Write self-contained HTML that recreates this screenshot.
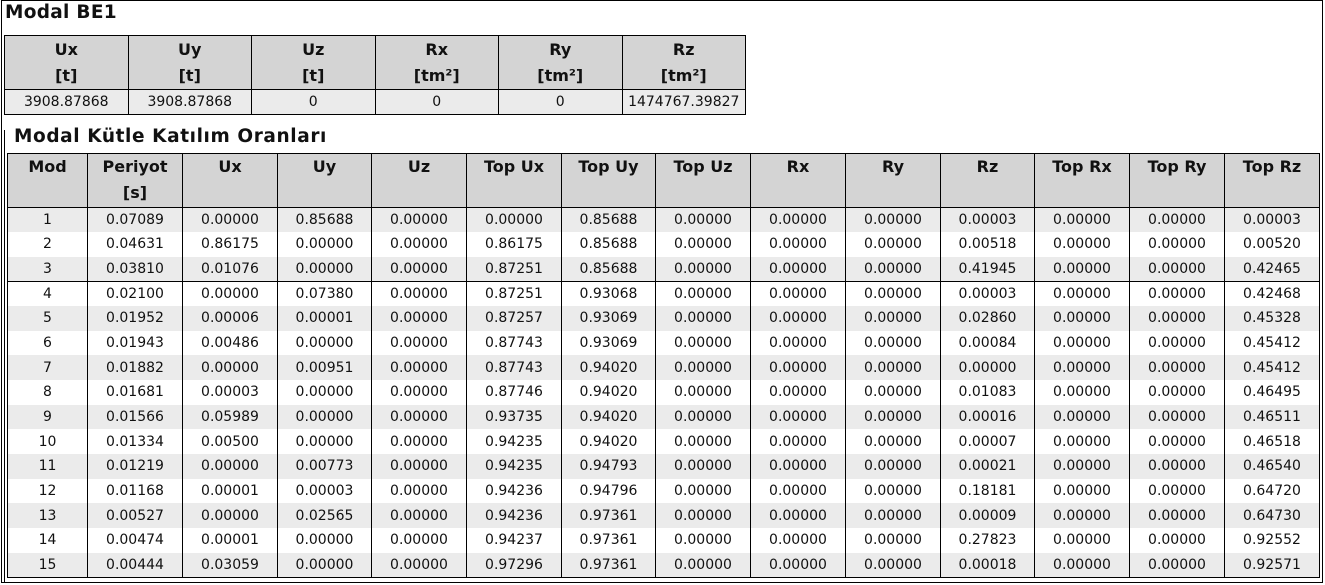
<!DOCTYPE html>
<html><head><meta charset="utf-8"><style>
*{margin:0;padding:0;box-sizing:border-box}
body{width:1325px;height:585px;background:#fff;font-family:"DejaVu Sans",Verdana,"Liberation Sans",sans-serif;color:#111;position:relative;overflow:hidden}
.frame{position:absolute;left:1px;top:0;width:1322px;height:583px;border:1px solid #000}
h1{position:absolute;left:5px;top:2px;font-size:18.5px;font-weight:bold;letter-spacing:0.3px}
h2{position:absolute;left:14px;top:126px;font-size:18.5px;font-weight:bold;letter-spacing:0.6px}
table{border-collapse:collapse;table-layout:fixed;position:absolute}
td,th{text-align:center;font-size:14px;padding:0;white-space:nowrap}
th{background:#d4d4d4;font-weight:bold;vertical-align:top;line-height:26px;padding-top:1px;font-size:16px}
#t1{left:4px;top:35px;width:742px;border:1px solid #000}
#t1 th,#t1 td{border:1px solid #000}
#t1 th{height:54px}
#t1 td{height:25px;background:#ebebeb}
#t2{left:7px;top:153px;width:1313px;border:1px solid #000}
#t2 th{height:54px;border:1px solid #000;padding-top:0;line-height:26px}
#t2 td{height:24.67px;border-left:1px solid #000;border-right:1px solid #000}
#t2 tr:nth-child(even) td{background:#ebebeb}
#t2 tr.sep td{border-bottom:1px solid #000}
.vl{position:absolute;left:4px;top:130px;width:1px;height:452px;background:#000}
</style></head><body>
<div class="frame"></div>
<h1>Modal BE1</h1>
<table id="t1">
<tr><th>Ux<br>[t]</th><th>Uy<br>[t]</th><th>Uz<br>[t]</th><th>Rx<br>[tm²]</th><th>Ry<br>[tm²]</th><th>Rz<br>[tm²]</th></tr>
<tr><td>3908.87868</td><td>3908.87868</td><td>0</td><td>0</td><td>0</td><td>1474767.39827</td></tr>
</table>
<div class="vl"></div>
<h2>Modal Kütle Katılım Oranları</h2>
<table id="t2">
<colgroup><col style="width:80px"><col style="width:95px"><col style="width:95px"><col style="width:94px"><col style="width:95px"><col style="width:95px"><col style="width:94px"><col style="width:95px"><col style="width:95px"><col style="width:95px"><col style="width:94px"><col style="width:95px"><col style="width:95px"><col style="width:95px"></colgroup>
<tr><th>Mod</th><th>Periyot<br>[s]</th><th>Ux</th><th>Uy</th><th>Uz</th><th>Top Ux</th><th>Top Uy</th><th>Top Uz</th><th>Rx</th><th>Ry</th><th>Rz</th><th>Top Rx</th><th>Top Ry</th><th>Top Rz</th></tr>
<tr><td>1</td><td>0.07089</td><td>0.00000</td><td>0.85688</td><td>0.00000</td><td>0.00000</td><td>0.85688</td><td>0.00000</td><td>0.00000</td><td>0.00000</td><td>0.00003</td><td>0.00000</td><td>0.00000</td><td>0.00003</td></tr>
<tr><td>2</td><td>0.04631</td><td>0.86175</td><td>0.00000</td><td>0.00000</td><td>0.86175</td><td>0.85688</td><td>0.00000</td><td>0.00000</td><td>0.00000</td><td>0.00518</td><td>0.00000</td><td>0.00000</td><td>0.00520</td></tr>
<tr class="sep"><td>3</td><td>0.03810</td><td>0.01076</td><td>0.00000</td><td>0.00000</td><td>0.87251</td><td>0.85688</td><td>0.00000</td><td>0.00000</td><td>0.00000</td><td>0.41945</td><td>0.00000</td><td>0.00000</td><td>0.42465</td></tr>
<tr><td>4</td><td>0.02100</td><td>0.00000</td><td>0.07380</td><td>0.00000</td><td>0.87251</td><td>0.93068</td><td>0.00000</td><td>0.00000</td><td>0.00000</td><td>0.00003</td><td>0.00000</td><td>0.00000</td><td>0.42468</td></tr>
<tr><td>5</td><td>0.01952</td><td>0.00006</td><td>0.00001</td><td>0.00000</td><td>0.87257</td><td>0.93069</td><td>0.00000</td><td>0.00000</td><td>0.00000</td><td>0.02860</td><td>0.00000</td><td>0.00000</td><td>0.45328</td></tr>
<tr><td>6</td><td>0.01943</td><td>0.00486</td><td>0.00000</td><td>0.00000</td><td>0.87743</td><td>0.93069</td><td>0.00000</td><td>0.00000</td><td>0.00000</td><td>0.00084</td><td>0.00000</td><td>0.00000</td><td>0.45412</td></tr>
<tr><td>7</td><td>0.01882</td><td>0.00000</td><td>0.00951</td><td>0.00000</td><td>0.87743</td><td>0.94020</td><td>0.00000</td><td>0.00000</td><td>0.00000</td><td>0.00000</td><td>0.00000</td><td>0.00000</td><td>0.45412</td></tr>
<tr><td>8</td><td>0.01681</td><td>0.00003</td><td>0.00000</td><td>0.00000</td><td>0.87746</td><td>0.94020</td><td>0.00000</td><td>0.00000</td><td>0.00000</td><td>0.01083</td><td>0.00000</td><td>0.00000</td><td>0.46495</td></tr>
<tr><td>9</td><td>0.01566</td><td>0.05989</td><td>0.00000</td><td>0.00000</td><td>0.93735</td><td>0.94020</td><td>0.00000</td><td>0.00000</td><td>0.00000</td><td>0.00016</td><td>0.00000</td><td>0.00000</td><td>0.46511</td></tr>
<tr><td>10</td><td>0.01334</td><td>0.00500</td><td>0.00000</td><td>0.00000</td><td>0.94235</td><td>0.94020</td><td>0.00000</td><td>0.00000</td><td>0.00000</td><td>0.00007</td><td>0.00000</td><td>0.00000</td><td>0.46518</td></tr>
<tr><td>11</td><td>0.01219</td><td>0.00000</td><td>0.00773</td><td>0.00000</td><td>0.94235</td><td>0.94793</td><td>0.00000</td><td>0.00000</td><td>0.00000</td><td>0.00021</td><td>0.00000</td><td>0.00000</td><td>0.46540</td></tr>
<tr><td>12</td><td>0.01168</td><td>0.00001</td><td>0.00003</td><td>0.00000</td><td>0.94236</td><td>0.94796</td><td>0.00000</td><td>0.00000</td><td>0.00000</td><td>0.18181</td><td>0.00000</td><td>0.00000</td><td>0.64720</td></tr>
<tr><td>13</td><td>0.00527</td><td>0.00000</td><td>0.02565</td><td>0.00000</td><td>0.94236</td><td>0.97361</td><td>0.00000</td><td>0.00000</td><td>0.00000</td><td>0.00009</td><td>0.00000</td><td>0.00000</td><td>0.64730</td></tr>
<tr><td>14</td><td>0.00474</td><td>0.00001</td><td>0.00000</td><td>0.00000</td><td>0.94237</td><td>0.97361</td><td>0.00000</td><td>0.00000</td><td>0.00000</td><td>0.27823</td><td>0.00000</td><td>0.00000</td><td>0.92552</td></tr>
<tr><td>15</td><td>0.00444</td><td>0.03059</td><td>0.00000</td><td>0.00000</td><td>0.97296</td><td>0.97361</td><td>0.00000</td><td>0.00000</td><td>0.00000</td><td>0.00018</td><td>0.00000</td><td>0.00000</td><td>0.92571</td></tr>
</table>
</body></html>
